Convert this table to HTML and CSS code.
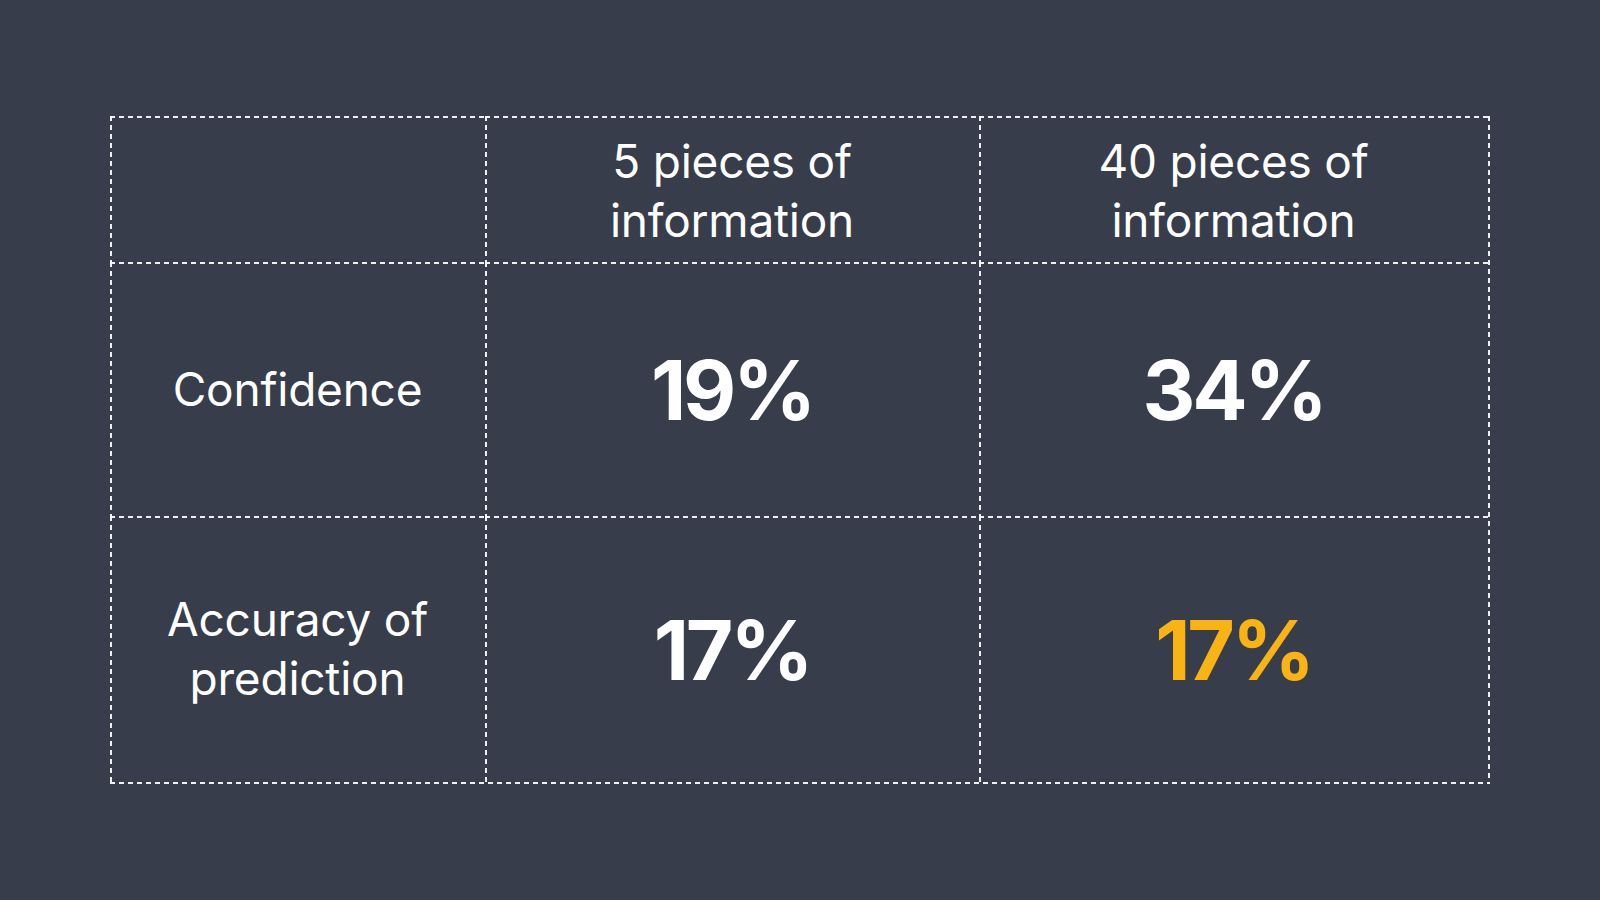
FILE: index.html
```html
<!DOCTYPE html>
<html lang="en">
<head>
<meta charset="utf-8">
<title>Confidence vs accuracy</title>
<link rel="stylesheet" href="styles.css">
</head>
<body>
<main class="page">
  <div class="table">
    <div class="cell corner"></div>
    <div class="cell head">5 pieces of<br>information</div>
    <div class="cell head">40 pieces of<br>information</div>
    <div class="cell label">Confidence</div>
    <div class="cell value">19%</div>
    <div class="cell value">34%</div>
    <div class="cell label">Accuracy of<br>prediction</div>
    <div class="cell value">17%</div>
    <div class="cell value highlight">17%</div>
  </div>
</main>
</body>
</html>
```

FILE: styles.css
```css
html, body {
  margin: 0;
  padding: 0;
}

body {
  background: #373d4a;
  color: #ffffff;
  font-family: Inter, "Noto Sans", "Liberation Sans", sans-serif;
}

.page {
  height: 100vh;
  display: flex;
  align-items: center;
  justify-content: center;
}

.table {
  display: grid;
  grid-template-columns: 375px 494px 509px;
  grid-template-rows: 146px 254px 266px;
  padding: 0 2px 2px 0;
  background-image:
    repeating-linear-gradient(to bottom, rgba(255,255,255,0.92) 0 5px, transparent 5px 9px),
    repeating-linear-gradient(to right, rgba(255,255,255,0.92) 0 5px, transparent 5px 9px);
  background-size: 2px 100%, 100% 2px;
  background-position: right top, left bottom;
  background-repeat: no-repeat;
}

.cell {
  display: flex;
  align-items: center;
  justify-content: center;
  text-align: center;
  background-image:
    repeating-linear-gradient(to right, rgba(255,255,255,0.92) 0 5px, transparent 5px 9px),
    repeating-linear-gradient(to bottom, rgba(255,255,255,0.92) 0 5px, transparent 5px 9px);
  background-size: 100% 2px, 2px 100%;
  background-position: left top, left top;
  background-repeat: no-repeat;
}

.head {
  font-size: 46px;
  line-height: 59px;
  font-weight: 400;
  letter-spacing: -0.005em;
  padding-top: 3px;
}

.label {
  font-size: 46px;
  line-height: 59px;
  font-weight: 400;
  letter-spacing: -0.005em;
}

.value {
  font-size: 82px;
  font-weight: 700;
  letter-spacing: -0.04em;
  line-height: 1;
  padding-top: 3px;
}

.highlight {
  color: #f9b312;
}
```
